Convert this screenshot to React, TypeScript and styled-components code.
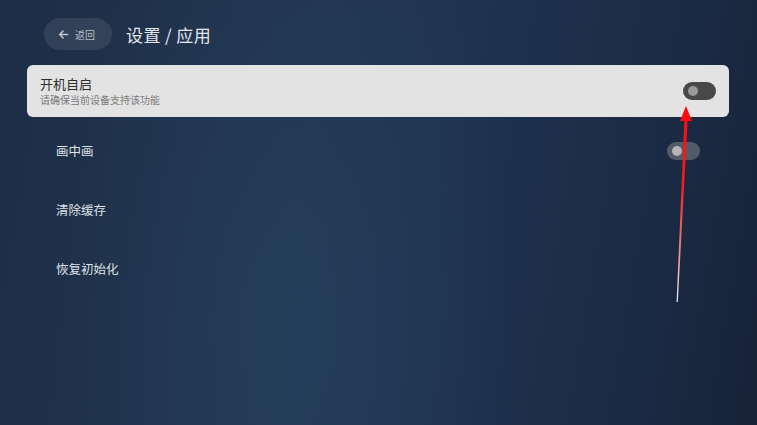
import React from "react";
import styled, { createGlobalStyle } from "styled-components";

const GlobalStyle = createGlobalStyle`
  html, body {
    margin: 0;
    padding: 0;
  }
  body {
    font-family: "Noto Sans CJK SC", "Noto Sans", sans-serif;
  }
`;

const Screen = styled.div`
  position: relative;
  width: 757px;
  height: 425px;
  overflow: hidden;
  background:
    radial-gradient(ellipse 230px 500px at 290px 330px, rgba(38, 68, 98, 0.6), rgba(38, 68, 98, 0) 100%),
    linear-gradient(100deg, #1e2d46 0%, #21354f 40%, #1f3450 55%, #1b2a43 85%, #172238 100%);
  box-sizing: border-box;
  padding: 18px 28px 0 27px;
`;

const Header = styled.div`
  display: flex;
  align-items: center;
  gap: 14px;
  padding-left: 17px;
  height: 32px;
`;

const BackButton = styled.div`
  display: flex;
  align-items: center;
  gap: 6px;
  width: 68px;
  height: 32px;
  box-sizing: border-box;
  padding-left: 14px;
  border-radius: 16px;
  background: rgba(255, 255, 255, 0.09);
  color: #b9bec7;
  font-size: 10px;
`;

const Title = styled.div`
  color: #e6e8ec;
  font-size: 17px;
  letter-spacing: 0.4px;
`;

const List = styled.div`
  display: flex;
  flex-direction: column;
  margin-top: 15px;
`;

const Item = styled.div<{ focused?: boolean }>`
  display: flex;
  align-items: center;
  justify-content: space-between;
  box-sizing: border-box;
  height: ${({ focused }) => (focused ? "52px" : "59px")};
  margin-bottom: ${({ focused }) => (focused ? "4px" : "0")};
  padding: ${({ focused }) => (focused ? "0 13px 0 13px" : "0 29px 0 29px")};
  border-radius: 6px;
  background: ${({ focused }) => (focused ? "#e3e3e3" : "transparent")};
`;

const Texts = styled.div`
  display: flex;
  flex-direction: column;
  gap: 1px;
`;

const Name = styled.div<{ focused?: boolean }>`
  font-size: ${({ focused }) => (focused ? "13px" : "12.5px")};
  color: ${({ focused }) => (focused ? "#2e2e2e" : "#dfe2e7")};
  line-height: 17px;
`;

const Hint = styled.div`
  font-size: 10px;
  color: #7a7a7a;
  line-height: 14px;
`;

const Toggle = styled.div<{ focused?: boolean }>`
  position: relative;
  width: 33px;
  height: 18px;
  border-radius: 9px;
  background: ${({ focused }) => (focused ? "#484848" : "rgba(150, 150, 150, 0.45)")};
  &::after {
    content: "";
    position: absolute;
    left: 5px;
    top: 4px;
    width: 10px;
    height: 10px;
    border-radius: 50%;
    background: ${({ focused }) => (focused ? "#9a9a9a" : "#b5b5b5")};
  }
`;

const Annotation = styled.svg`
  position: absolute;
  left: 0;
  top: 0;
  pointer-events: none;
`;

type Row = { name: string; hint?: string; toggle?: boolean };

const rows: Row[] = [
  { name: "开机自启", hint: "请确保当前设备支持该功能", toggle: true },
  { name: "画中画", toggle: true },
  { name: "清除缓存" },
  { name: "恢复初始化" },
];

export default function App() {
  return (
    <Screen>
      <GlobalStyle />
      <Header>
        <BackButton>
          <svg width="11" height="11" viewBox="0 0 12 12" fill="none" stroke="#c3c7ce" strokeWidth="1.6" strokeLinecap="round" strokeLinejoin="round">
            <path d="M10.5 6H1.8M5.6 2.2L1.8 6l3.8 3.8" />
          </svg>
          <span>返回</span>
        </BackButton>
        <Title>设置 / 应用</Title>
      </Header>
      <List>
        {rows.map((row, i) => {
          const focused = i === 0;
          return (
            <Item key={row.name} focused={focused}>
              <Texts>
                <Name focused={focused}>{row.name}</Name>
                {row.hint && <Hint>{row.hint}</Hint>}
              </Texts>
              {row.toggle && <Toggle focused={focused} />}
            </Item>
          );
        })}
      </List>
      <Annotation width="757" height="425" viewBox="0 0 757 425">
        <defs>
          <linearGradient id="arrowFill" x1="677" y1="302" x2="686" y2="108" gradientUnits="userSpaceOnUse">
            <stop offset="0" stopColor="#f2f2f2" />
            <stop offset="0.35" stopColor="#e86a6a" />
            <stop offset="0.6" stopColor="#ff1a1a" />
            <stop offset="1" stopColor="#ff0a0a" />
          </linearGradient>
        </defs>
        <path d="M676.6 302 L684.4 120 L687.6 120 L677.8 302 Z" fill="url(#arrowFill)" />
        <path d="M686 106 L692 121 L680 121 Z" fill="#ff0a0a" />
      </Annotation>
    </Screen>
  );
}
